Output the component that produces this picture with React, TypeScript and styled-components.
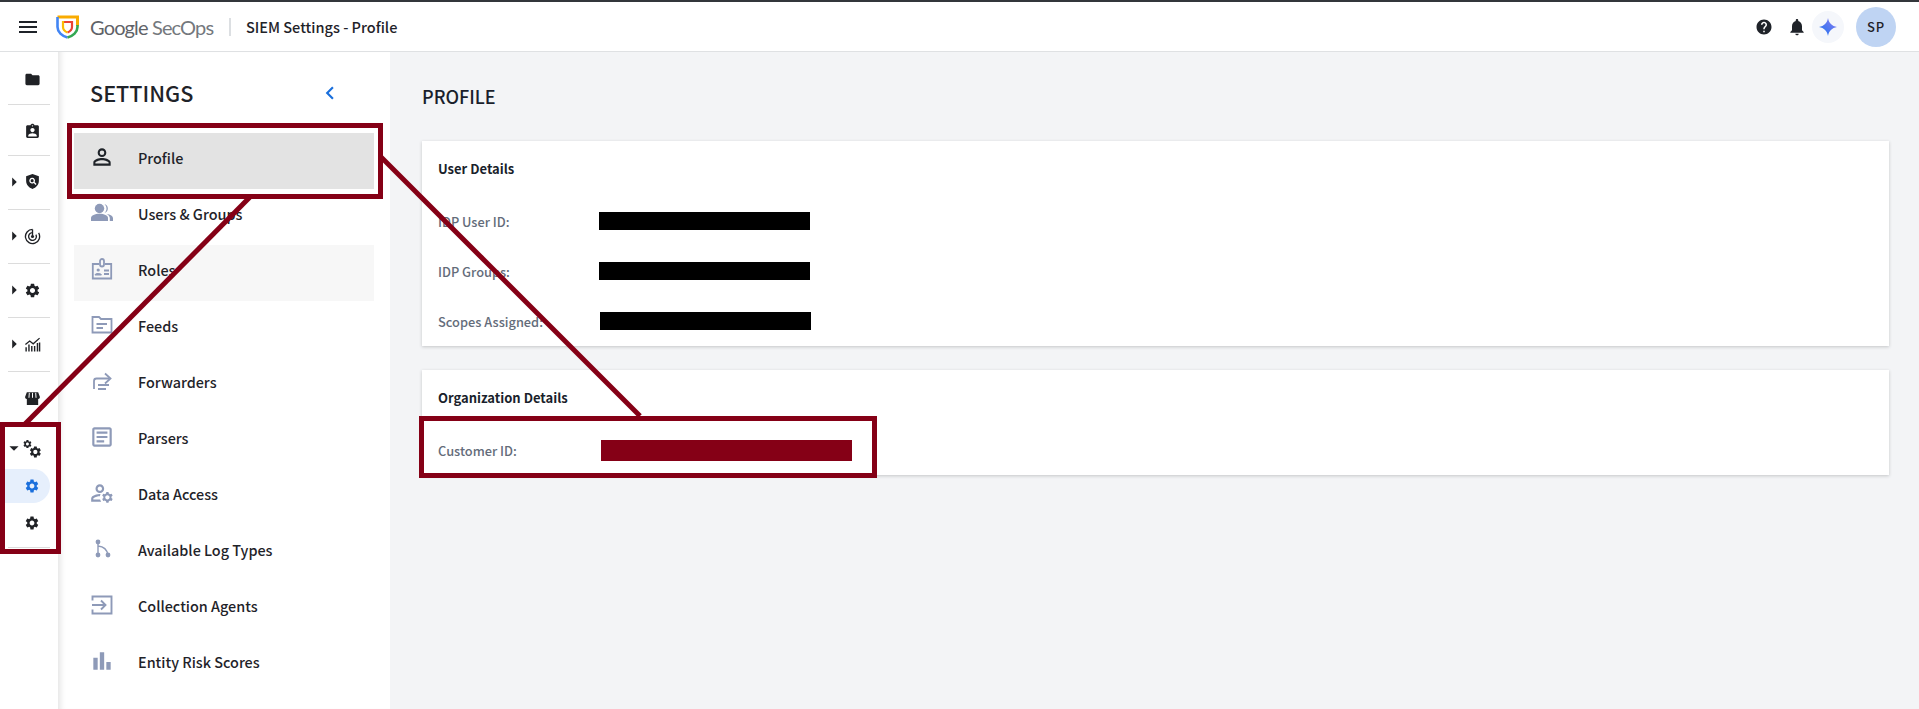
import React from 'react';
import styled, { createGlobalStyle } from 'styled-components';
import {
  MdMenu, MdFolder, MdArrowRight, MdArrowDropDown, MdSettings, MdChevronLeft, MdHelp, MdNotifications,
  MdPersonOutline, MdOutlineManageAccounts, MdBarChart, MdOutlineArticle, MdAssignmentInd,
} from 'react-icons/md';

const FONT = '"Noto Sans CJK KR", "Noto Sans", sans-serif';
const ICON_GRAY = '#8e9ab8';
const MAROON = '#850016';

const GlobalStyle = createGlobalStyle`
  html, body { margin: 0; padding: 0; height: 100%; overflow: hidden; background: #fff; }
  body { font-family: ${FONT}; color: #1f2329; }
`;

const Page = styled.div`
  position: relative;
  width: 1919px;
  height: 709px;
  display: flex;
  flex-direction: column;
  border-top: 2px solid #33363b;
  box-sizing: border-box;
  overflow: hidden;
`;

const Header = styled.header`
  height: 50px;
  flex: none;
  box-sizing: border-box;
  border-bottom: 1px solid #dfe1e3;
  display: flex;
  align-items: center;
  padding: 0 23px 0 16px;
  background: #fff;
`;

const MenuButton = styled.div`
  display: flex;
  flex: none;
  width: 24px;
  justify-content: center;
  font-size: 24px;
  color: #1f2329;
`;

const Brand = styled.div`
  display: flex;
  align-items: center;
  margin-left: 16px;
`;

const BrandName = styled.span`
  margin-left: 11px;
  font-family: Lato, "Open Sans", sans-serif;
  font-size: 20px;
  letter-spacing: -0.85px;
  color: #74787d;
  white-space: nowrap;
  width: 126px;
`;

const BrandStrong = styled.span`
  color: #5f6368;
`;

const HeaderDivider = styled.div`
  width: 2px;
  height: 18px;
  margin-left: 13px;
  background: #dcdfe2;
`;

const PageTitle = styled.div`
  margin-left: 15px;
  font-size: 14.5px;
  font-weight: 500;
  color: #1f2329;
`;

const HeaderActions = styled.div`
  margin-left: auto;
  display: flex;
  align-items: center;
`;

const ActionIcon = styled.div<{ $gap: number; $size: number }>`
  display: flex;
  font-size: ${(p) => p.$size}px;
  color: #1f2329;
  margin-right: ${(p) => p.$gap}px;
`;

const SparkBadge = styled.div`
  width: 32px;
  height: 32px;
  border-radius: 50%;
  background: #f5f7fb;
  display: flex;
  align-items: center;
  justify-content: center;
  margin-right: 12px;
`;

const Avatar = styled.div`
  width: 40px;
  height: 40px;
  border-radius: 50%;
  background: #bfd4f3;
  display: flex;
  align-items: center;
  justify-content: center;
  font-size: 13px;
  font-weight: 500;
  letter-spacing: 0.8px;
  color: #1f2329;
`;

const Body = styled.div`
  flex: 1;
  display: flex;
  min-height: 0;
`;

const Rail = styled.nav`
  width: 58px;
  flex: none;
  background: #fff;
  display: flex;
  flex-direction: column;
`;

const RailSection = styled.div<{ $h: number }>`
  height: ${(p) => p.$h}px;
  margin: 0 8px;
  border-bottom: 1px solid #dcdcdc;
  box-sizing: border-box;
`;

const RailRow = styled.div<{ $h: number }>`
  height: ${(p) => p.$h}px;
  display: grid;
  grid-template-columns: 16px 16px 26px;
  align-items: center;
  margin: 0 -8px;
  width: 58px;
  color: #202226;
`;

const Caret = styled.span`
  grid-column: 1 / 3;
  grid-row: 1;
  display: flex;
  font-size: 22px;
  margin-left: 3px;
  color: #202226;
  svg {
    flex: none;
  }
`;

const RailIcon = styled.span`
  grid-column: 2 / 4;
  grid-row: 1;
  justify-self: end;
  margin-right: 17.5px;
  display: flex;
  font-size: 17px;
`;

const SubRow = styled.div<{ $active?: boolean }>`
  height: 34px;
  margin: 0 0 0 -8px;
  width: 50px;
  display: flex;
  align-items: center;
  justify-content: flex-end;
  padding-right: 10px;
  box-sizing: border-box;
  font-size: 16px;
  border-radius: 0 17px 17px 0;
  color: ${(p) => (p.$active ? '#1a6fdc' : '#202226')};
  background: ${(p) => (p.$active ? '#e6effc' : 'transparent')};
  & + & {
    margin-top: 3px;
  }
`;

const Sidebar = styled.aside`
  width: 332px;
  flex: none;
  box-sizing: border-box;
  background: #fff;
  box-shadow: inset 7px 0 6px -5px rgba(0, 0, 0, 0.12);
  padding: 0 16px;
`;

const SidebarHead = styled.div`
  height: 81px;
  display: flex;
  align-items: center;
  padding: 0 0 0 16px;
  box-sizing: border-box;
`;

const SidebarTitle = styled.h1`
  margin: 0;
  font-size: 21.6px;
  font-weight: 500;
  line-height: 1;
  color: #1f2329;
`;

const Collapse = styled.span`
  margin-left: 124px;
  display: flex;
  font-size: 26px;
  color: #1a6fdc;
`;

const NavItem = styled.div<{ $state?: 'active' | 'hover' }>`
  height: 56px;
  width: 300px;
  display: flex;
  align-items: center;
  padding: 0 0 8px 15px;
  box-sizing: border-box;
  background: ${(p) => (p.$state === 'active' ? '#e3e3e3' : p.$state === 'hover' ? '#f7f7f7' : 'transparent')};
`;

const NavIcon = styled.span<{ $dark?: boolean }>`
  width: 26px;
  height: 26px;
  display: flex;
  align-items: center;
  justify-content: center;
  font-size: 26px;
  color: ${(p) => (p.$dark ? '#1f2329' : ICON_GRAY)};
`;

const NavLabel = styled.span`
  margin-left: 23px;
  font-size: 14.4px;
  font-weight: 500;
  color: #1f2329;
  white-space: nowrap;
`;

const Content = styled.main`
  flex: 1;
  background: #f3f4f6;
  padding: 30px 30px 0 32px;
  min-width: 0;
`;

const ContentTitle = styled.h2`
  margin: 0 0 31px;
  font-size: 18px;
  line-height: 28px;
  font-weight: 500;
  color: #1a1f2c;
`;

const Card = styled.section<{ $h: number }>`
  height: ${(p) => p.$h}px;
  box-sizing: border-box;
  background: #fff;
  padding: 16px 16px 0;
  margin-bottom: 24px;
  box-shadow: 0 1px 3px rgba(60, 64, 67, 0.25);
`;

const CardTitle = styled.h3<{ $gap: number }>`
  margin: 0 0 ${(p) => p.$gap}px;
  font-size: 13px;
  line-height: 24px;
  font-weight: 700;
  color: #1a1f2c;
`;

const DetailRow = styled.div<{ $h: number }>`
  height: ${(p) => p.$h}px;
  display: flex;
  align-items: center;
`;

const DetailLabel = styled.span`
  width: 161px;
  font-size: 12.8px;
  font-weight: 500;
  color: #646c7a;
  white-space: nowrap;
`;

const Redacted = styled.div<{ $w: number; $h: number; $color: string; $nudge?: number }>`
  width: ${(p) => p.$w}px;
  height: ${(p) => p.$h}px;
  margin-left: ${(p) => p.$nudge ?? 0}px;
  background: ${(p) => p.$color};
`;

const Annotations = styled.svg`
  position: absolute;
  left: 0;
  top: -2px;
  width: 1919px;
  height: 709px;
  pointer-events: none;
`;

const ShieldLogo = () => (
  <svg width="23" height="24" viewBox="0 0 23 24" fill="none">
    <path d="M1.5 2 H21.5 V11" stroke="#f9ab00" strokeWidth="3" />
    <path d="M1.5 2 V12 C1.5 17 6 21 11.5 22.5" stroke="#4285f4" strokeWidth="2.6" />
    <path d="M21.5 10 V12 C21.5 17 17 21 11.5 22.5" stroke="#34a853" strokeWidth="2.6" />
    <path d="M7 7 H16 V12 C16 14.5 14 16.5 11.5 17.5" stroke="#ea4335" strokeWidth="2.2" />
    <path d="M7 6 V12 C7 14.5 9 16.5 11.5 17.5" stroke="#fbbc04" strokeWidth="2.2" />
  </svg>
);

const Spark = () => (
  <svg width="20" height="20" viewBox="0 0 20 20">
    <defs>
      <linearGradient id="spark" x1="0" y1="1" x2="1" y2="0">
        <stop offset="0" stopColor="#1a73f0" />
        <stop offset="1" stopColor="#8c7cf0" />
      </linearGradient>
    </defs>
    <path d="M10 1 C10.8 6 14 9.2 19 10 C14 10.8 10.8 14 10 19 C9.2 14 6 10.8 1 10 C6 9.2 9.2 6 10 1 Z" fill="url(#spark)" />
  </svg>
);

const ShieldSearch = () => (
  <svg width="1em" height="1em" viewBox="0 0 24 24">
    <path fill="currentColor" fillRule="evenodd" d="M12 1.5 L21 4.5 V11 C21 16.5 17.2 20.8 12 22.5 C6.8 20.8 3 16.5 3 11 V4.5 Z M11.5 6.8 a4 4 0 1 0 2.2 7.3 l2.7 2.7 1.3-1.3 -2.7-2.7 a4 4 0 0 0 -3.5-6 Z M11.5 8.6 a2.2 2.2 0 1 1 0 4.4 2.2 2.2 0 0 1 0-4.4 Z" />
  </svg>
);

const Radar = () => (
  <svg width="1em" height="1em" viewBox="0 0 24 24" fill="none" stroke="currentColor" strokeWidth="1.9">
    <path d="M12 2 A10 10 0 1 0 20.7 7" />
    <path d="M12 6.5 A5.5 5.5 0 1 0 16.8 9.3" />
    <circle cx="12" cy="12" r="2.2" fill="currentColor" stroke="none" />
    <path d="M12 12 V2" />
  </svg>
);

const LineBars = () => (
  <svg width="1em" height="1em" viewBox="0 0 24 24" fill="none" stroke="currentColor">
    <path d="M2 12 L8 7 L13 11 L22 3" strokeWidth="1.8" />
    <path d="M3 22 V16 M7 22 V12 M11 22 V14 M15 22 V14 M19 22 V10 M22 22 V9" strokeWidth="2" />
  </svg>
);

const Storefront = () => (
  <svg width="1em" height="1em" viewBox="0 0 24 24">
    <path fill="currentColor" d="M4 3 H20 L22.5 10 C22.5 12 21 12.8 20 12.6 V21 H4 V12.6 C3 12.8 1.5 12 1.5 10 Z" />
    <path d="M7.5 4 L7 11 M12 4 V11 M16.5 4 L17 11" stroke="#fff" strokeWidth="1.4" />
  </svg>
);

const GEAR_PATH = 'M19.14 12.94c.04-.3.06-.61.06-.94 0-.32-.02-.64-.07-.94l2.03-1.58c.18-.14.23-.41.12-.61l-1.92-3.32c-.12-.22-.37-.29-.59-.22l-2.39.96c-.5-.38-1.03-.7-1.62-.94l-.36-2.54c-.04-.24-.24-.41-.48-.41h-3.84c-.24 0-.43.17-.47.41l-.36 2.54c-.59.24-1.13.57-1.62.94l-2.39-.96c-.22-.08-.47 0-.59.22L2.74 8.87c-.12.21-.08.47.12.61l2.03 1.58c-.05.3-.09.63-.09.94s.02.64.07.94l-2.03 1.58c-.18.14-.23.41-.12.61l1.92 3.32c.12.22.37.29.59.22l2.39-.96c.5.38 1.03.7 1.62.94l.36 2.54c.05.24.24.41.48.41h3.84c.24 0 .44-.17.47-.41l.36-2.54c.59-.24 1.13-.56 1.62-.94l2.39.96c.22.08.47 0 .59-.22l1.92-3.32c.12-.22.07-.47-.12-.61l-2.01-1.58zM12 15.6c-1.98 0-3.6-1.62-3.6-3.6s1.62-3.6 3.6-3.6 3.6 1.62 3.6 3.6-1.62 3.6-3.6 3.6z';

const Gears = () => (
  <svg width="20" height="20" viewBox="0 0 20 20">
    <g transform="translate(1.4,1) scale(0.42)"><path fill="currentColor" d={GEAR_PATH} /></g>
    <g transform="translate(7.4,7) scale(0.58)"><path fill="currentColor" d={GEAR_PATH} /></g>
  </svg>
);

const UsersGroup = () => (
  <svg width="1em" height="1em" viewBox="0 0 26 26" fill="currentColor">
    <circle cx="10.5" cy="8.5" r="4.7" />
    <path d="M2 21 V18 C2 15.5 6 13.8 10.5 13.8 C15 13.8 19 15.5 19 18 V21 Z" />
    <path d="M15.5 4 A4.7 4.7 0 0 1 15.5 13 C17 11.5 17.5 10 17.5 8.5 C17.5 7 17 5.5 15.5 4 Z" />
    <path d="M17.5 14 C21.5 14.5 24 16 24 18.2 V21 H20.8 V18 C20.8 16.5 19.5 15 17.5 14 Z" />
  </svg>
);

const RoleBadge = () => (
  <svg width="1em" height="1em" viewBox="0 0 26 26" fill="none" stroke="currentColor" strokeWidth="1.8">
    <path d="M10 8 H3.8 V22.5 H22.2 V8 H16" />
    <rect x="11" y="3" width="4" height="7.5" rx="2" />
    <circle cx="9.2" cy="14" r="1.6" fill="currentColor" stroke="none" />
    <path d="M6 19 C6 17 12.4 17 12.4 19 Z" fill="currentColor" strokeWidth="1" />
    <path d="M15 14.5 H20 M15 18 H20" />
  </svg>
);

const FeedFolder = () => (
  <svg width="1em" height="1em" viewBox="0 0 26 26" fill="none" stroke="currentColor" strokeWidth="1.8">
    <path d="M3.5 20.5 V5 H10 L12 7 H22.5 V20.5 Z" />
    <path d="M7.5 12 H18 M7.5 16 H14" />
  </svg>
);

const Forward = () => (
  <svg width="1em" height="1em" viewBox="0 0 26 26" fill="none" stroke="currentColor" strokeWidth="1.8">
    <path d="M5 21 V13 C5 11.5 6 10.5 7.5 10.5 H20" />
    <path d="M16 5.5 L21.5 10.5 L16 15.5" />
    <path d="M9 17 H20 M9 21 H17" />
  </svg>
);

const LogTypes = () => (
  <svg width="1em" height="1em" viewBox="0 0 26 26" fill="currentColor">
    <circle cx="9" cy="6" r="2.4" />
    <circle cx="9" cy="19" r="2.4" />
    <circle cx="19" cy="19" r="2.4" />
    <path d="M9 6 V19 M9 10 C14 10.5 18 13 19 19" stroke="currentColor" strokeWidth="1.4" fill="none" />
  </svg>
);

const AgentInput = () => (
  <svg width="1em" height="1em" viewBox="0 0 26 26" fill="none" stroke="currentColor" strokeWidth="1.9">
    <path d="M3.5 8.5 V4.5 H22.5 V21.5 H3.5 V17.5" />
    <path d="M3 13 H16 M12 8.5 L16.5 13 L12 17.5" />
  </svg>
);

const NAV_ITEMS: { label: string; icon: React.ReactNode; state?: 'active' | 'hover' }[] = [
  { label: 'Profile', icon: <MdPersonOutline />, state: 'active' },
  { label: 'Users & Groups', icon: <UsersGroup /> },
  { label: 'Roles', icon: <RoleBadge />, state: 'hover' },
  { label: 'Feeds', icon: <FeedFolder /> },
  { label: 'Forwarders', icon: <Forward /> },
  { label: 'Parsers', icon: <MdOutlineArticle /> },
  { label: 'Data Access', icon: <MdOutlineManageAccounts /> },
  { label: 'Available Log Types', icon: <LogTypes /> },
  { label: 'Collection Agents', icon: <AgentInput /> },
  { label: 'Entity Risk Scores', icon: <MdBarChart /> },
];

export default function App() {
  return (
    <>
      <GlobalStyle />
      <Page>
        <Header>
          <MenuButton><MdMenu /></MenuButton>
          <Brand>
            <ShieldLogo />
            <BrandName><BrandStrong>Google</BrandStrong> SecOps</BrandName>
            <HeaderDivider />
            <PageTitle>SIEM Settings - Profile</PageTitle>
          </Brand>
          <HeaderActions>
            <ActionIcon $gap={14} $size={18}><MdHelp /></ActionIcon>
            <ActionIcon $gap={5} $size={20}><MdNotifications /></ActionIcon>
            <SparkBadge><Spark /></SparkBadge>
            <Avatar>SP</Avatar>
          </HeaderActions>
        </Header>
        <Body>
          <Rail>
            <RailSection $h={53}>
              <RailRow $h={55}><RailIcon><MdFolder /></RailIcon></RailRow>
            </RailSection>
            <RailSection $h={51}>
              <RailRow $h={53}><RailIcon><MdAssignmentInd /></RailIcon></RailRow>
            </RailSection>
            <RailSection $h={54}>
              <RailRow $h={51}><Caret><MdArrowRight /></Caret><RailIcon><ShieldSearch /></RailIcon></RailRow>
            </RailSection>
            <RailSection $h={54}>
              <RailRow $h={52}><Caret><MdArrowRight /></Caret><RailIcon><Radar /></RailIcon></RailRow>
            </RailSection>
            <RailSection $h={54}>
              <RailRow $h={52}><Caret><MdArrowRight /></Caret><RailIcon><MdSettings /></RailIcon></RailRow>
            </RailSection>
            <RailSection $h={54}>
              <RailRow $h={52}><Caret><MdArrowRight /></Caret><RailIcon><LineBars /></RailIcon></RailRow>
            </RailSection>
            <RailSection $h={54}>
              <RailRow $h={52}><RailIcon><Storefront /></RailIcon></RailRow>
            </RailSection>
            <RailSection $h={122}>
              <RailRow $h={43}><Caret><MdArrowDropDown /></Caret><RailIcon><Gears /></RailIcon></RailRow>
              <SubRow $active><MdSettings /></SubRow>
              <SubRow><MdSettings /></SubRow>
            </RailSection>
          </Rail>
          <Sidebar>
            <SidebarHead>
              <SidebarTitle>SETTINGS</SidebarTitle>
              <Collapse><MdChevronLeft /></Collapse>
            </SidebarHead>
            {NAV_ITEMS.map((item) => (
              <NavItem key={item.label} $state={item.state}>
                <NavIcon $dark={item.state === 'active'}>{item.icon}</NavIcon>
                <NavLabel>{item.label}</NavLabel>
              </NavItem>
            ))}
          </Sidebar>
          <Content>
            <ContentTitle>PROFILE</ContentTitle>
            <Card $h={205}>
              <CardTitle $gap={15}>User Details</CardTitle>
              <DetailRow $h={50}>
                <DetailLabel>IDP User ID:</DetailLabel>
                <Redacted $w={211} $h={18} $color="#000" />
              </DetailRow>
              <DetailRow $h={50}>
                <DetailLabel>IDP Groups:</DetailLabel>
                <Redacted $w={211} $h={18} $color="#000" />
              </DetailRow>
              <DetailRow $h={50}>
                <DetailLabel>Scopes Assigned:</DetailLabel>
                <Redacted $w={211} $h={18} $color="#000" $nudge={1} />
              </DetailRow>
            </Card>
            <Card $h={105}>
              <CardTitle $gap={25}>Organization Details</CardTitle>
              <DetailRow $h={30}>
                <DetailLabel>Customer ID:</DetailLabel>
                <Redacted $w={251} $h={21} $color={MAROON} $nudge={2} />
              </DetailRow>
            </Card>
          </Content>
        </Body>
        <Annotations viewBox="0 0 1919 709" fill="none" stroke={MAROON} strokeWidth="5">
          <rect x="69.5" y="125.5" width="311" height="71" />
          <path d="M250 197 L25 424" strokeWidth="5" />
          <path d="M380 156 L640 416" strokeWidth="5" />
          <rect x="2.5" y="424.5" width="56" height="127" />
          <rect x="421.5" y="418.5" width="453" height="57" />
        </Annotations>
      </Page>
    </>
  );
}
